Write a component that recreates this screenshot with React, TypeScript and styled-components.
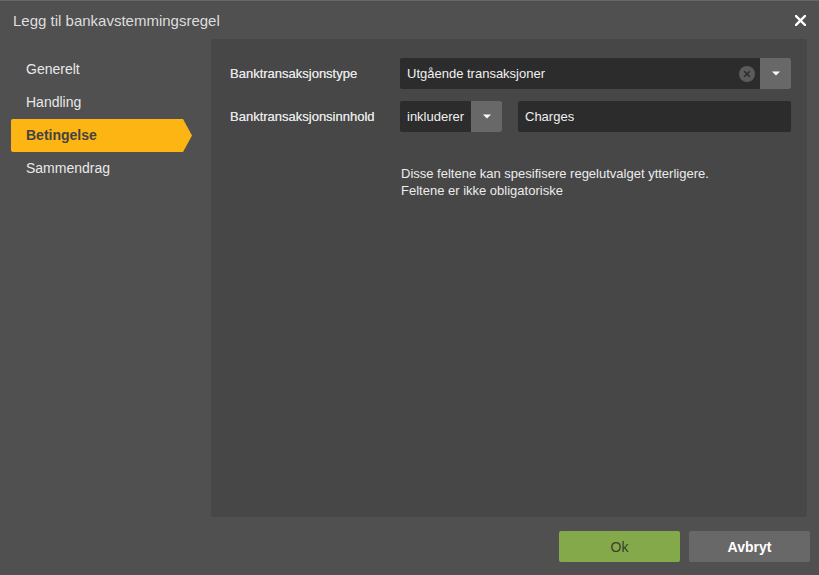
import React, { useState } from "react";
import styled, { createGlobalStyle } from "styled-components";

const GlobalStyle = createGlobalStyle`
  html, body {
    margin: 0;
    padding: 0;
    background: #505050;
  }
  body {
    font-family: "Liberation Sans", Arial, sans-serif;
  }
`;

const Dialog = styled.div`
  width: 819px;
  height: 575px;
  box-sizing: border-box;
  background: #505050;
  border-top: 1px solid #676767;
  display: flex;
  flex-direction: column;
  color: #e6e6e6;
`;

const TitleBar = styled.div`
  height: 38px;
  display: flex;
  align-items: center;
  justify-content: space-between;
  padding: 0 12px 0 13px;
  font-size: 15px;
  color: #dedede;
`;

const CloseButton = styled.button`
  width: 14px;
  height: 14px;
  padding: 0;
  border: 0;
  background: none;
  display: flex;
  align-items: center;
  justify-content: center;
  cursor: pointer;
`;

const Body = styled.div`
  flex: 1;
  display: flex;
  padding-right: 12px;
`;

const Sidebar = styled.nav`
  width: 200px;
  padding: 14px 0 0 11px;
  display: flex;
  flex-direction: column;
`;

const NavItem = styled.div<{ $active?: boolean }>`
  height: 33px;
  width: 181px;
  display: flex;
  align-items: center;
  padding: 0 0 1px 15px;
  box-sizing: border-box;
  font-size: 14px;
  border-radius: 2px 0 0 2px;
  cursor: pointer;
  color: ${p => (p.$active ? "#434343" : "#e8e8e8")};
  font-weight: ${p => (p.$active ? "bold" : "normal")};
  background: ${p => (p.$active ? "#fdb514" : "transparent")};
  clip-path: ${p =>
    p.$active ? "polygon(0 0, 172px 0, 100% 50%, 172px 100%, 0 100%)" : "none"};
`;

const Panel = styled.section`
  flex: 1;
  height: 478px;
  background: #474747;
  border-radius: 2px;
  padding: 19px 16px 0 19px;
  box-sizing: border-box;
  display: flex;
  flex-direction: column;
  gap: 12px;
`;

const Row = styled.div`
  display: flex;
  align-items: center;
`;

const Label = styled.div`
  width: 170px;
  font-size: 13px;
  color: #e4e4e4;
  text-shadow: 0 0 0.4px #e4e4e4;
`;

const Field = styled.div<{ $width?: string }>`
  display: flex;
  height: 31px;
  flex: ${p => (p.$width ? "none" : "1")};
  width: ${p => p.$width ?? "auto"};
  background: #2c2c2c;
  border-radius: 2px;
  overflow: hidden;
`;

const Value = styled.div`
  flex: 1;
  display: flex;
  align-items: center;
  padding-left: 7px;
  font-size: 13px;
  color: #f0f0f0;
  white-space: nowrap;
`;

const TextInput = styled.input`
  flex: 1;
  height: 31px;
  margin-left: 16px;
  box-sizing: border-box;
  border: 0;
  border-radius: 2px;
  background: #2c2c2c;
  box-shadow: 1px 1px 0 #3d4a4c;
  padding: 0 7px;
  font-family: inherit;
  font-size: 13px;
  color: #f0f0f0;
  outline: none;
`;

const ClearIcon = styled.span`
  display: flex;
  align-items: center;
  padding-right: 5px;
`;

const DropButton = styled.span`
  width: 31px;
  background: #686868;
  display: flex;
  align-items: center;
  justify-content: center;
`;

const Help = styled.p`
  margin: 21px 0 0 171px;
  font-size: 13px;
  line-height: 17px;
  color: #ececec;
`;

const Footer = styled.div`
  height: 57px;
  display: flex;
  align-items: center;
  justify-content: flex-end;
  gap: 9px;
  padding-right: 9px;
`;

const Button = styled.button<{ $primary?: boolean }>`
  width: 121px;
  height: 31px;
  border: 0;
  border-radius: 2px;
  font-family: inherit;
  font-size: 14px;
  cursor: pointer;
  background: ${p => (p.$primary ? "#84a94b" : "#686868")};
  color: ${p => (p.$primary ? "#3b4029" : "#ffffff")};
  font-weight: ${p => (p.$primary ? "normal" : "bold")};
`;

const Caret = () => (
  <svg width="8" height="5" viewBox="0 0 8 5">
    <path d="M0 0.5h8L4 4.5z" fill="#ffffff" />
  </svg>
);

const steps = ["Generelt", "Handling", "Betingelse", "Sammendrag"];

export default function App() {
  const [step, setStep] = useState("Betingelse");
  const [content, setContent] = useState("Charges");

  return (
    <>
      <GlobalStyle />
      <Dialog>
        <TitleBar>
          <span>Legg til bankavstemmingsregel</span>
          <CloseButton aria-label="Lukk">
            <svg width="11" height="11" viewBox="0 0 11 11">
              <path d="M1 1l9 9M10 1l-9 9" stroke="#ffffff" strokeWidth="2.4" strokeLinecap="square" />
            </svg>
          </CloseButton>
        </TitleBar>
        <Body>
          <Sidebar>
            {steps.map(s => (
              <NavItem key={s} $active={s === step} onClick={() => setStep(s)}>
                {s}
              </NavItem>
            ))}
          </Sidebar>
          <Panel>
            <Row>
              <Label>Banktransaksjonstype</Label>
              <Field>
                <Value>Utgående transaksjoner</Value>
                <ClearIcon>
                  <svg width="16" height="16" viewBox="0 0 16 16">
                    <circle cx="8" cy="8" r="8" fill="#5b5b5b" />
                    <path d="M5.2 5.2l5.6 5.6M10.8 5.2l-5.6 5.6" stroke="#2c2c2c" strokeWidth="1.6" />
                  </svg>
                </ClearIcon>
                <DropButton>
                  <Caret />
                </DropButton>
              </Field>
            </Row>
            <Row>
              <Label>Banktransaksjonsinnhold</Label>
              <Field $width="102px">
                <Value>inkluderer</Value>
                <DropButton>
                  <Caret />
                </DropButton>
              </Field>
              <TextInput value={content} onChange={e => setContent(e.target.value)} />
            </Row>
            <Help>
              Disse feltene kan spesifisere regelutvalget ytterligere.
              <br />
              Feltene er ikke obligatoriske
            </Help>
          </Panel>
        </Body>
        <Footer>
          <Button $primary>Ok</Button>
          <Button>Avbryt</Button>
        </Footer>
      </Dialog>
    </>
  );
}
